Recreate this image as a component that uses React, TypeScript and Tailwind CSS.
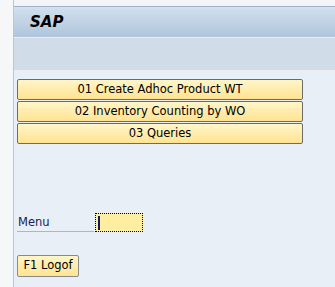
import React from "react";

const SapButton = ({ label }: { label: string }) => (
    <div className="h-[21px] flex items-center justify-center border border-[#6b6b6b] rounded-[2px] bg-gradient-to-b from-[#fff6c8] to-[#ffe391] text-[11.5px] text-black leading-none">
        {label}
    </div>
);

const App = () => {
    const items = ["01 Create Adhoc Product WT", "02 Inventory Counting by WO", "03 Queries"];

    return (
        <div className="w-[335px] h-[287px] flex bg-[#f3f5f8] overflow-hidden font-['Tahoma','DejaVu_Sans',sans-serif]">
            <div className="w-[14px] shrink-0 border-r border-[#b9c6d6] bg-[#f6f7f9]" />
            <div className="flex-1 flex flex-col pt-[6px]">
                <div className="border-t border-[#9fb2c9] h-[31px] bg-gradient-to-b from-[#d3e0ed] to-[#afc5db] flex items-center pl-[16px]">
                    <span className="font-bold italic text-[15px] text-black">SAP</span>
                </div>
                <div className="h-[34px] bg-[#d0dce7] border-t border-[#e9eff5] border-b border-[#9fb0c4]" />
                <div className="flex-1 bg-[#e9eff7] px-[3px] pt-[8px]">
                    <div className="w-[286px] flex flex-col gap-[1px]">
                        {items.map((item) => (
                            <SapButton key={item} label={item} />
                        ))}
                    </div>
                    <div className="mt-[69px] flex items-end">
                        <div className="w-[77px] border-b border-[#b5b5b5] text-[11.5px] text-[#1b1b4d] pl-[1px] pb-[1px] leading-[15px]">
                            Menu
                        </div>
                        <div className="ml-[1px] w-[48px] h-[19px] border border-dotted border-black bg-[#ffeda0] flex items-center pl-[2px]">
                            <div className="w-[2px] h-[14px] bg-[#0a1a6e]" />
                        </div>
                    </div>
                    <div className="mt-[23px] w-[62px] h-[22px] border border-[#8a8a8a] rounded-[2px] bg-gradient-to-b from-[#fff6c8] to-[#ffe391] flex items-center justify-center text-[11.5px] text-black">
                        F1 Logof
                    </div>
                </div>
            </div>
        </div>
    );
};

export default App;
